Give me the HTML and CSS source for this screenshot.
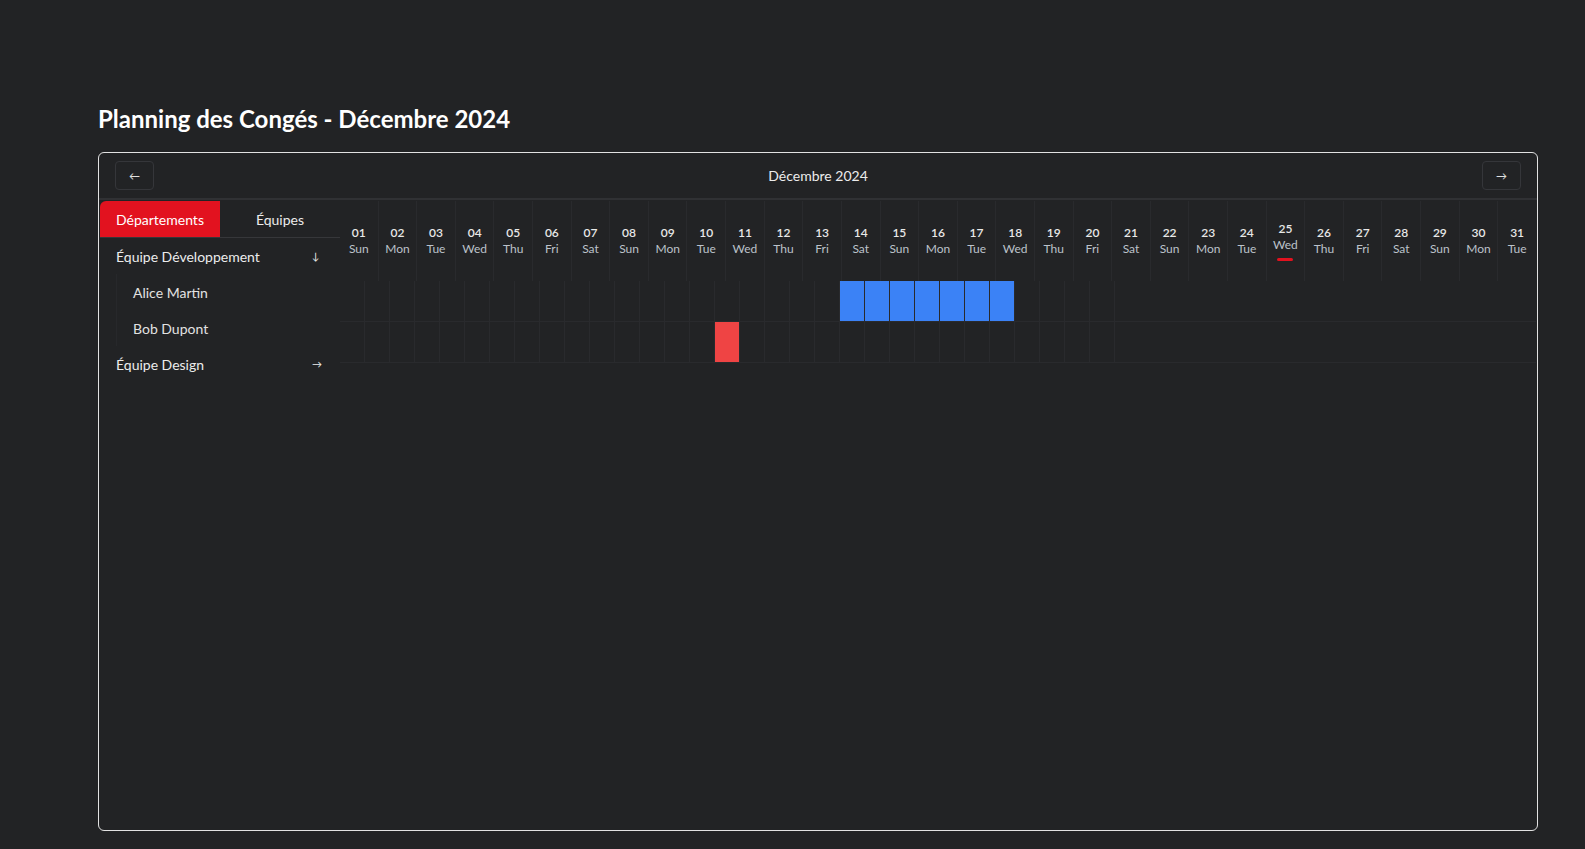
FILE: index.html
```html
<!DOCTYPE html>
<html lang="fr">
<head>
<meta charset="utf-8">
<title>Planning des Congés</title>
<link rel="stylesheet" href="styles.css">
</head>
<body>
<div class="page">
  <h1 class="title">Planning des Congés - Décembre 2024</h1>
  <div class="planner">
    <div class="nav">
      <button class="nav-btn">←</button>
      <div class="month">Décembre 2024</div>
      <button class="nav-btn">→</button>
    </div>
    <div class="body">
      <aside class="sidebar">
        <div class="tabs">
          <div class="tab active">Départements</div>
          <div class="tab">Équipes</div>
        </div>
        <div class="group">
          <div class="group-row"><span>Équipe Développement</span><span class="arrow">↓</span></div>
          <div class="members">
            <div class="member">Alice Martin</div>
            <div class="member">Bob Dupont</div>
          </div>
        </div>
        <div class="group">
          <div class="group-row"><span>Équipe Design</span><span class="arrow">→</span></div>
        </div>
      </aside>
      <main class="calendar">
        <div class="days">
          <div class="day"><span class="num">01</span><span class="name">Sun</span></div>
          <div class="day"><span class="num">02</span><span class="name">Mon</span></div>
          <div class="day"><span class="num">03</span><span class="name">Tue</span></div>
          <div class="day"><span class="num">04</span><span class="name">Wed</span></div>
          <div class="day"><span class="num">05</span><span class="name">Thu</span></div>
          <div class="day"><span class="num">06</span><span class="name">Fri</span></div>
          <div class="day"><span class="num">07</span><span class="name">Sat</span></div>
          <div class="day"><span class="num">08</span><span class="name">Sun</span></div>
          <div class="day"><span class="num">09</span><span class="name">Mon</span></div>
          <div class="day"><span class="num">10</span><span class="name">Tue</span></div>
          <div class="day"><span class="num">11</span><span class="name">Wed</span></div>
          <div class="day"><span class="num">12</span><span class="name">Thu</span></div>
          <div class="day"><span class="num">13</span><span class="name">Fri</span></div>
          <div class="day"><span class="num">14</span><span class="name">Sat</span></div>
          <div class="day"><span class="num">15</span><span class="name">Sun</span></div>
          <div class="day"><span class="num">16</span><span class="name">Mon</span></div>
          <div class="day"><span class="num">17</span><span class="name">Tue</span></div>
          <div class="day"><span class="num">18</span><span class="name">Wed</span></div>
          <div class="day"><span class="num">19</span><span class="name">Thu</span></div>
          <div class="day"><span class="num">20</span><span class="name">Fri</span></div>
          <div class="day"><span class="num">21</span><span class="name">Sat</span></div>
          <div class="day"><span class="num">22</span><span class="name">Sun</span></div>
          <div class="day"><span class="num">23</span><span class="name">Mon</span></div>
          <div class="day"><span class="num">24</span><span class="name">Tue</span></div>
          <div class="day today"><span class="num">25</span><span class="name">Wed</span><span class="mark"></span></div>
          <div class="day"><span class="num">26</span><span class="name">Thu</span></div>
          <div class="day"><span class="num">27</span><span class="name">Fri</span></div>
          <div class="day"><span class="num">28</span><span class="name">Sat</span></div>
          <div class="day"><span class="num">29</span><span class="name">Sun</span></div>
          <div class="day"><span class="num">30</span><span class="name">Mon</span></div>
          <div class="day"><span class="num">31</span><span class="name">Tue</span></div>
        </div>
        <div class="row">
          <div class="cell"></div><div class="cell"></div><div class="cell"></div><div class="cell"></div><div class="cell"></div>
          <div class="cell"></div><div class="cell"></div><div class="cell"></div><div class="cell"></div><div class="cell"></div>
          <div class="cell"></div><div class="cell"></div><div class="cell"></div><div class="cell"></div><div class="cell"></div>
          <div class="cell"></div><div class="cell"></div><div class="cell"></div><div class="cell"></div><div class="cell"></div>
          <div class="cell leave-blue"></div><div class="cell leave-blue"></div><div class="cell leave-blue"></div><div class="cell leave-blue"></div><div class="cell leave-blue"></div>
          <div class="cell leave-blue"></div><div class="cell leave-blue"></div><div class="cell"></div><div class="cell"></div><div class="cell"></div>
          <div class="cell"></div>
        </div>
        <div class="row">
          <div class="cell"></div><div class="cell"></div><div class="cell"></div><div class="cell"></div><div class="cell"></div>
          <div class="cell"></div><div class="cell"></div><div class="cell"></div><div class="cell"></div><div class="cell"></div>
          <div class="cell"></div><div class="cell"></div><div class="cell"></div><div class="cell"></div><div class="cell"></div>
          <div class="cell leave-red"></div><div class="cell"></div><div class="cell"></div><div class="cell"></div><div class="cell"></div>
          <div class="cell"></div><div class="cell"></div><div class="cell"></div><div class="cell"></div><div class="cell"></div>
          <div class="cell"></div><div class="cell"></div><div class="cell"></div><div class="cell"></div><div class="cell"></div>
          <div class="cell"></div>
        </div>
      </main>
    </div>
  </div>
</div>
</body>
</html>
```
FILE: styles.css
```css
* { box-sizing: border-box; }

html, body {
  margin: 0;
  background: #222325;
  font-family: Lato, "Noto Sans", "Liberation Sans", sans-serif;
  color: #e6e6e6;
}

.page {
  padding: 104px 47px 0 98px;
}

.title {
  margin: 0 0 19px;
  font-size: 24px;
  line-height: 29px;
  font-weight: 700;
  color: #ffffff;
}

.planner {
  height: 679px;
  border: 1px solid #e2e2e2;
  border-radius: 6px;
  display: flex;
  flex-direction: column;
}

.nav {
  height: 47px;
  padding: 0 16px;
  display: flex;
  align-items: center;
  justify-content: space-between;
  border-bottom: 2px solid #303134;
}

.nav-btn {
  width: 39px;
  height: 29px;
  padding: 0;
  background: transparent;
  border: 1px solid #35363a;
  border-radius: 4px;
  color: #e0e0e0;
  font-family: Lato, "DejaVu Sans", sans-serif;
  font-size: 11px;
  display: flex;
  align-items: center;
  justify-content: center;
}

.month {
  font-size: 14px;
  color: #ececec;
}

.body {
  flex: 1;
  display: flex;
  padding: 1px;
}

.sidebar {
  width: 240px;
  flex: none;
}

.tabs {
  display: flex;
  height: 37px;
  border-bottom: 1px solid #36373a;
}

.tab {
  flex: 1;
  display: flex;
  align-items: center;
  justify-content: center;
  font-size: 14px;
  color: #ececec;
}

.tab.active {
  background: #e2121f;
  border-top-left-radius: 6px;
  color: #ffffff;
}

.group-row {
  height: 36px;
  padding: 0 16px;
  display: flex;
  align-items: center;
  justify-content: space-between;
  font-size: 14px;
  color: #ececec;
}

.arrow {
  width: 12px;
  font-size: 10px;
  text-align: left;
}

.members {
  margin-left: 16px;
  border-left: 1px solid #27282b;
}

.member {
  height: 36px;
  padding-left: 16px;
  display: flex;
  align-items: center;
  font-size: 14px;
  color: #e2e2e2;
}

.calendar {
  flex: 1;
  min-width: 0;
}

.days {
  display: flex;
  height: 80px;
}

.day {
  flex: 1;
  display: flex;
  flex-direction: column;
  align-items: center;
  justify-content: center;
  border-right: 1px solid #292a2d;
  font-size: 12px;
  line-height: 16px;
}

.day:last-child { border-right: none; }

.num {
  font-weight: 600;
  color: #e8e8e8;
}

.name {
  color: #bcc2ca;
}

.mark {
  width: 16px;
  height: 3px;
  margin-top: 5px;
  border-radius: 2px;
  background: #e2121f;
}

.row {
  display: flex;
  height: 41px;
  border-bottom: 1px solid #292a2d;
}

.cell {
  width: 25px;
  flex: none;
  border-right: 1px solid #292a2d;
}

.leave-blue { background: #3b82f6; }
.leave-red { background: #ef4444; }
```
